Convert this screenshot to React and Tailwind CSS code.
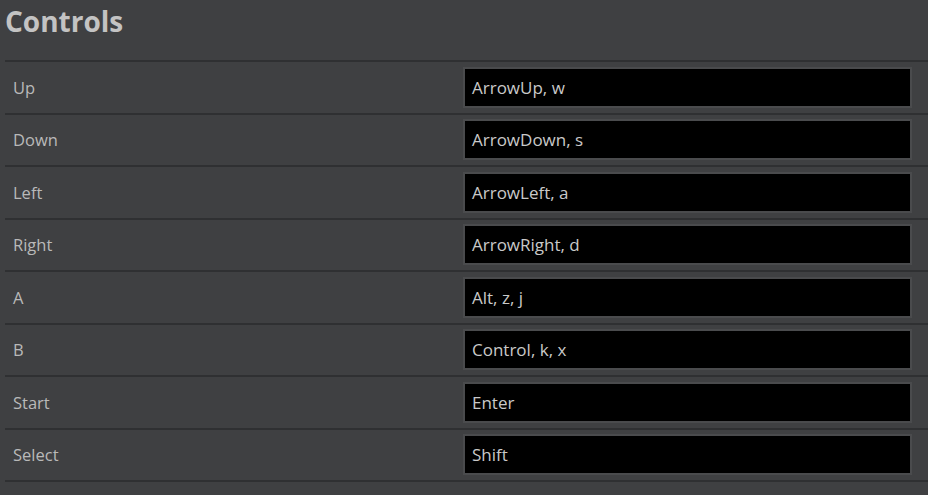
export default function App() {
  const rows = [
    ["Up", "ArrowUp, w"],
    ["Down", "ArrowDown, s"],
    ["Left", "ArrowLeft, a"],
    ["Right", "ArrowRight, d"],
    ["A", "Alt, z, j"],
    ["B", "Control, k, x"],
    ["Start", "Enter"],
    ["Select", "Shift"],
  ];
  return (
    <div className="w-[928px] h-[495px] overflow-hidden bg-[#3f4042] pl-[5px] font-['Open_Sans',sans-serif]">
      <h2 className="h-[60px] pt-[1px] text-[28px] leading-[40px] font-bold text-[#c3c3c3]">Controls</h2>
      <div className="border-b-2 border-[#2f3032]">
        {rows.map(([label, value]) => (
          <div key={label} className="flex items-center h-[52.5px] border-t-2 border-[#2f3032]">
            <div className="w-[458px] pl-[8px] pt-[2px] text-[16.5px] text-[#b9b9b9]">{label}</div>
            <div className="flex-1 pr-[16px]">
              <div className="h-[41px] bg-black border-2 border-[#4a4b4d] pl-[7px] flex items-center text-[17px] text-[#c9c9c9]">
                {value}
              </div>
            </div>
          </div>
        ))}
      </div>
    </div>
  );
}
